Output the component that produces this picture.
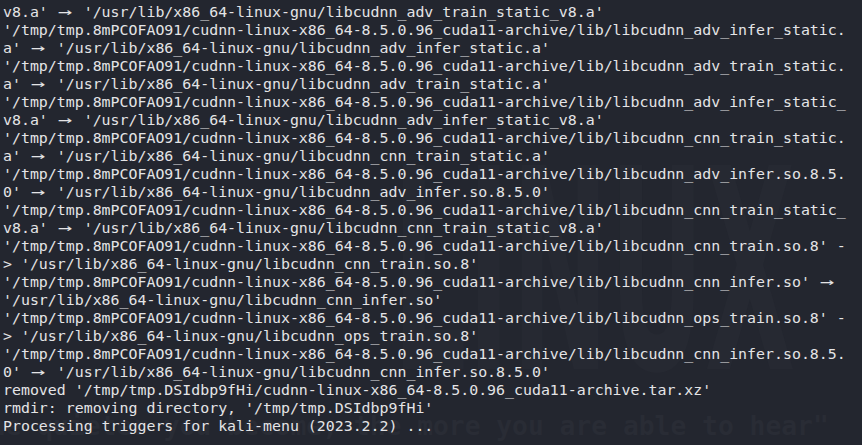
import React from 'react';

type Part = string | { arrow: true };

const A: Part = { arrow: true };
const TMP = "'/tmp/tmp.8mPCOFAO91/cudnn-linux-x86_64-8.5.0.96_cuda11-archive/lib/";
const USR = "'/usr/lib/x86_64-linux-gnu/";

const lines: Part[][] = [
  ["v8.a' ", A, ` ${USR}libcudnn_adv_train_static_v8.a'`],
  [`${TMP}libcudnn_adv_infer_static.`],
  ["a' ", A, ` ${USR}libcudnn_adv_infer_static.a'`],
  [`${TMP}libcudnn_adv_train_static.`],
  ["a' ", A, ` ${USR}libcudnn_adv_train_static.a'`],
  [`${TMP}libcudnn_adv_infer_static_`],
  ["v8.a' ", A, ` ${USR}libcudnn_adv_infer_static_v8.a'`],
  [`${TMP}libcudnn_cnn_train_static.`],
  ["a' ", A, ` ${USR}libcudnn_cnn_train_static.a'`],
  [`${TMP}libcudnn_adv_infer.so.8.5.`],
  ["0' ", A, ` ${USR}libcudnn_adv_infer.so.8.5.0'`],
  [`${TMP}libcudnn_cnn_train_static_`],
  ["v8.a' ", A, ` ${USR}libcudnn_cnn_train_static_v8.a'`],
  [`${TMP}libcudnn_cnn_train.so.8' -`],
  [`> ${USR}libcudnn_cnn_train.so.8'`],
  [`${TMP}libcudnn_cnn_infer.so' `, A],
  [`${USR}libcudnn_cnn_infer.so'`],
  [`${TMP}libcudnn_ops_train.so.8' -`],
  [`> ${USR}libcudnn_ops_train.so.8'`],
  [`${TMP}libcudnn_cnn_infer.so.8.5.`],
  ["0' ", A, ` ${USR}libcudnn_cnn_infer.so.8.5.0'`],
  ["removed '/tmp/tmp.DSIdbp9fHi/cudnn-linux-x86_64-8.5.0.96_cuda11-archive.tar.xz'"],
  ["rmdir: removing directory, '/tmp/tmp.DSIdbp9fHi'"],
  ["Processing triggers for kali-menu (2023.2.2) ..."],
];

const Arrow = () => (
  <span className="inline-block w-[2ch] text-center align-top">
    <span className="inline-block scale-x-[1.6]">→</span>
  </span>
);

export default function App() {
  return (
    <div className="relative w-[862px] h-[445px] overflow-hidden bg-[#23262f]">
      {/* wallpaper watermark */}
      <div className="pointer-events-none absolute inset-0 select-none">
        <div className="absolute left-[392px] top-[132px] origin-left scale-x-[0.42] whitespace-pre text-[280px] font-bold leading-none text-[#262932] [font-family:'DejaVu_Sans',sans-serif]">
          LINUX
        </div>
        <div className="absolute left-[-42px] top-[413px] whitespace-pre text-[26.3px] font-bold leading-none text-[#292c35] [font-family:'DejaVu_Sans_Mono',monospace]">
          "the quieter you become, the more you are able to hear"
        </div>
      </div>

      <div className="relative whitespace-pre pl-[3px] pt-[3px] text-[14.9px] leading-[18px] text-[#e4e4e6] [font-family:'DejaVu_Sans_Mono','Liberation_Mono',monospace]">
        {lines.map((parts, i) => (
          <div key={i} className="h-[18px]">
            {parts.map((p, j) => (typeof p === 'string' ? <span key={j}>{p}</span> : <Arrow key={j} />))}
          </div>
        ))}
      </div>
    </div>
  );
}
